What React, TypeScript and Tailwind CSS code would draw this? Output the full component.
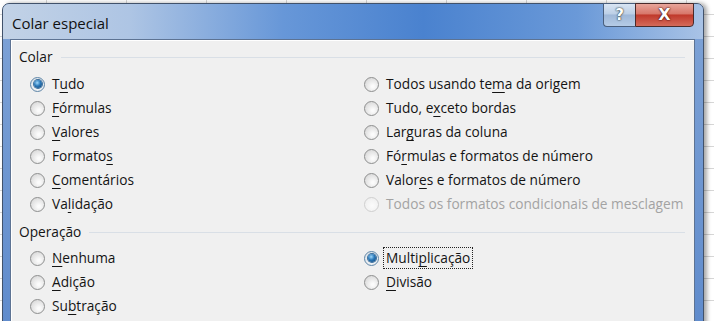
import React from "react";

type Opt = { pre: string; key: string; post: string; checked?: boolean; disabled?: boolean; focus?: boolean };

function Radio({ checked, disabled }: { checked?: boolean; disabled?: boolean }) {
  return (
    <span
      className={
        "w-[15px] h-[15px] rounded-full border flex items-center justify-center shrink-0 " +
        (disabled
          ? "border-[#cfcfcf] bg-[radial-gradient(circle_at_55%_60%,#fbfbfb,#ececec)]"
          : checked
          ? "border-[#5f86a8] bg-[radial-gradient(circle_at_55%_60%,#fdfdfd,#d6dde3)]"
          : "border-[#8e8f8f] bg-[radial-gradient(circle_at_60%_65%,#fbfbfb_10%,#d7d7d7_85%)]")
      }
    >
      {checked && (
        <span className="w-[8px] h-[8px] rounded-full bg-[radial-gradient(circle_at_40%_35%,#9fd8fb_0%,#2a78b8_45%,#0f3f70_100%)] shadow-[0_0_0_1px_#3a6e9c]" />
      )}
    </span>
  );
}

function Option({ o }: { o: Opt }) {
  return (
    <div className="h-[24px] flex items-center gap-[7px]">
      <Radio checked={o.checked} disabled={o.disabled} />
      <span
        className={
          "leading-[18px] whitespace-nowrap px-[1px] -ml-[1px] " +
          (o.disabled ? "text-[#a3a3a3] " : "text-[#141414] ") +
          (o.focus ? "outline outline-1 outline-dotted outline-[#222] outline-offset-[1px]" : "")
        }
      >
        {o.pre}
        {o.key && <span className={o.disabled ? "" : "underline underline-offset-[3px] decoration-1"}>{o.key}</span>}
        {o.post}
      </span>
    </div>
  );
}

function Header({ label }: { label: string }) {
  return (
    <div className="h-[20px] flex items-center gap-[8px] pr-[9px]">
      <span className="text-[#141414] leading-[20px]">{label}</span>
      <span className="flex-1 h-px bg-[#d9dfe6]" />
    </div>
  );
}

const colarLeft: Opt[] = [
  { pre: "T", key: "u", post: "do", checked: true },
  { pre: "", key: "F", post: "órmulas" },
  { pre: "", key: "V", post: "alores" },
  { pre: "Formato", key: "s", post: "" },
  { pre: "", key: "C", post: "omentários" },
  { pre: "Va", key: "l", post: "idação" },
];
const colarRight: Opt[] = [
  { pre: "Todos usando te", key: "m", post: "a da origem" },
  { pre: "Tudo, e", key: "x", post: "ceto bordas" },
  { pre: "Lar", key: "g", post: "uras da coluna" },
  { pre: "Fó", key: "r", post: "mulas e formatos de número" },
  { pre: "Valor", key: "e", post: "s e formatos de número" },
  { pre: "Todos os formatos condicionais de mesclagem", key: "", post: "", disabled: true },
];
const opLeft: Opt[] = [
  { pre: "", key: "N", post: "enhuma" },
  { pre: "", key: "A", post: "dição" },
  { pre: "Su", key: "b", post: "tração" },
];
const opRight: Opt[] = [
  { pre: "Multi", key: "p", post: "licação", checked: true, focus: true },
  { pre: "", key: "D", post: "ivisão" },
];

function Columns({ left, right }: { left: Opt[]; right: Opt[] }) {
  return (
    <div className="grid grid-cols-[334px_1fr] pl-[11px]">
      <div className="flex flex-col">
        {left.map((o, i) => (
          <Option key={i} o={o} />
        ))}
      </div>
      <div className="flex flex-col">
        {right.map((o, i) => (
          <Option key={i} o={o} />
        ))}
      </div>
    </div>
  );
}

export default function App() {
  return (
    <div
      className="w-[714px] h-[321px] overflow-hidden bg-white bg-[linear-gradient(90deg,#d6d6d6_1px,transparent_1px),linear-gradient(#d6d6d6_1px,transparent_1px)] bg-size-[80px_22px] bg-position-[46px_14px] pt-[3px] pl-[2px] text-[13.7px] font-medium"
      style={{ fontFamily: '"Open Sans", "Noto Sans", "Liberation Sans", sans-serif' }}
    >
      <div className="w-[702px] h-[330px] rounded-t-[7px] border border-[#41526b] bg-[linear-gradient(180deg,#7fa3d6,#5f8bcc)] shadow-[3px_0_4px_rgba(0,0,0,0.35)] flex flex-col">
        <div className="h-[35px] shrink-0 rounded-t-[6px] bg-[linear-gradient(90deg,#c2d2e6_0%,#aec5e4_18%,#6797d8_40%,#4a82cf_60%,#6a99d8_82%,#a9c3e6_100%)] flex justify-between pl-[9px] pr-[9px]">
          <span className="text-[15px] font-normal text-[#111] leading-[35px] pt-[2px]">Colar especial</span>
          <div className="flex h-[24px] -mt-px">
            <div className="w-[32px] h-full border border-[#4a5f7d] border-r-0 rounded-bl-[4px] bg-[linear-gradient(180deg,#d9e5f3_0%,#bccfe6_45%,#9fb8d8_50%,#b5cbe6_100%)] flex items-center justify-center">
              <span className="text-white font-bold text-[15px] leading-none [text-shadow:0_0_1px_#233,0_0_2px_#233]" style={{ fontFamily: '"DejaVu Sans", sans-serif' }}>?</span>
            </div>
            <div className="w-[59px] h-full border border-[#4a2a2a] rounded-br-[4px] bg-[linear-gradient(180deg,#e8a59a_0%,#d7776a_45%,#c0392b_50%,#d46a5a_100%)] flex items-center justify-center">
              <span className="text-white font-bold text-[16px] leading-none [text-shadow:0_0_1px_#300,0_0_2px_#300]" style={{ fontFamily: '"DejaVu Sans", sans-serif' }}>X</span>
            </div>
          </div>
        </div>
        <div className="flex-1 ml-[7px] mr-[8px] border border-[#5d7393] bg-[#f0f0f0] shadow-[inset_1px_1px_0_#ffffff] pt-[7px] pl-[8px]">
          <Header label="Colar" />
          <div className="h-[5px]" />
          <Columns left={colarLeft} right={colarRight} />
          <div className="h-[6px]" />
          <Header label="Operação" />
          <div className="h-[4px]" />
          <Columns left={opLeft} right={opRight} />
        </div>
      </div>
    </div>
  );
}
